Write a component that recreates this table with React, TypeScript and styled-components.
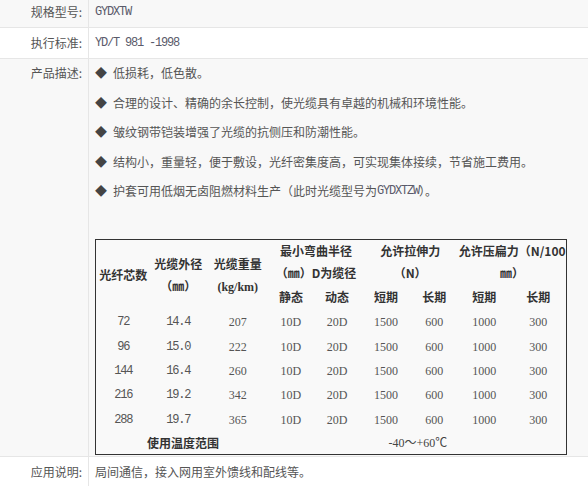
import React from "react";
import styled, { createGlobalStyle } from "styled-components";

const Global = createGlobalStyle`
  html, body { margin: 0; padding: 0; background: #fff; }
  body { font-family: "Noto Sans CJK SC", "Noto Sans", sans-serif; font-size: 12px; color: #555; }
`;

const Page = styled.div`
  width: 588px;
`;

const Row = styled.div<{ $alt?: boolean; $pt: number; $pb: number }>`
  display: grid;
  grid-template-columns: 89px 1fr;
  background: ${(p) => (p.$alt ? "#f8f8f8" : "#ffffff")};
  border-bottom: 1px solid #e6e6e6;
  line-height: 16px;
  & > * {
    padding-top: ${(p) => p.$pt}px;
    padding-bottom: ${(p) => p.$pb}px;
  }
`;

const Label = styled.div`
  box-sizing: border-box;
  text-align: right;
  padding-right: 6px;
  border-right: 1px solid #e6e6e6;
  color: #555;
  white-space: nowrap;
`;

const Value = styled.div`
  padding-left: 6px;
  color: #555;
  min-width: 0;
`;

const Mono = styled.span`
  font-family: "Liberation Mono", "DejaVu Sans Mono", monospace;
  font-size: 12px;
  letter-spacing: -1.2px;
  color: #5a5a6a;
  line-height: 16px;
  vertical-align: top;
`;

const Items = styled.div`
  display: flex;
  flex-direction: column;
  gap: 13.5px;
`;

const Item = styled.div`
  white-space: nowrap;
  height: 16px;
`;

const Bullet = styled.span`
  color: #444;
  margin-right: 6px;
`;

const Spec = styled.table`
  margin-top: 26.5px;
  width: 472px;
  table-layout: fixed;
  border-collapse: collapse;
  border: 1px solid #333;
  background: #f9f9f9;
`;

const Tr = styled.tr<{ $h: number }>`
  height: ${(p) => p.$h}px;
`;

const Th = styled.td`
  padding: 0;
  text-align: center;
  vertical-align: middle;
  font-weight: 700;
  color: #333;
  line-height: 22px;
  white-space: nowrap;
`;

const SerifBold = styled.span`
  font-family: "Liberation Serif", serif;
  font-size: 12px;
`;

const Td = styled.td<{ $mono?: boolean }>`
  padding: 0;
  text-align: center;
  vertical-align: middle;
  color: #555;
  line-height: 16px;
  white-space: nowrap;
  font-family: ${(p) =>
    p.$mono
      ? `"Liberation Mono", "DejaVu Sans Mono", monospace`
      : `"Liberation Serif", "Noto Sans CJK SC", serif`};
  letter-spacing: ${(p) => (p.$mono ? "-1.2px" : "0")};
  font-size: 12px;
`;

const TempCell = styled.td`
  padding: 0;
  text-align: center;
  vertical-align: middle;
  color: #444;
  font-family: "Liberation Serif", "Noto Sans CJK SC", serif;
  font-size: 12px;
`;

const Col = styled.col<{ $w: number }>`
  width: ${(p) => p.$w}px;
`;

const widths = [55, 55, 64, 42, 50, 48, 48, 52, 56];

const rows = [
  ["72", "14.4", "207"],
  ["96", "15.0", "222"],
  ["144", "16.4", "260"],
  ["216", "19.2", "342"],
  ["288", "19.7", "365"],
];

const items: React.ReactNode[] = [
  "低损耗，低色散。",
  "合理的设计、精确的余长控制，使光缆具有卓越的机械和环境性能。",
  "皱纹钢带铠装增强了光缆的抗侧压和防潮性能。",
  "结构小，重量轻，便于敷设，光纤密集度高，可实现集体接续，节省施工费用。",
  <>
    护套可用低烟无卤阻燃材料生产（此时光缆型号为<Mono>GYDXTZW</Mono>）。
  </>,
];

export default function App() {
  return (
    <Page>
      <Global />
      <Row $alt $pt={4} $pb={7}>
        <Label>规格型号:</Label>
        <Value>
          <Mono>GYDXTW</Mono>
        </Value>
      </Row>
      <Row $pt={7} $pb={7}>
        <Label>执行标准:</Label>
        <Value>
          <Mono>YD/T 981 -1998</Mono>
        </Value>
      </Row>
      <Row $alt $pt={6} $pb={1}>
        <Label>产品描述:</Label>
        <Value>
          <Items>
            {items.map((t, i) => (
              <Item key={i}>
                <Bullet>◆</Bullet>
                {t}
              </Item>
            ))}
            <Spec>
              <colgroup>
                {widths.map((w, i) => (
                  <Col key={i} $w={w} />
                ))}
              </colgroup>
              <tbody>
                <Tr $h={44}>
                  <Th rowSpan={2}>光纤芯数</Th>
                  <Th rowSpan={2}>
                    光缆外径
                    <br />（㎜）
                  </Th>
                  <Th rowSpan={2}>
                    光缆重量
                    <br />
                    <SerifBold>(kg/km)</SerifBold>
                  </Th>
                  <Th colSpan={2}>
                    最小弯曲半径
                    <br />
                    （㎜）D为缆径
                  </Th>
                  <Th colSpan={2}>
                    允许拉伸力
                    <br />
                    （N）
                  </Th>
                  <Th colSpan={2}>
                    允许压扁力（N/100
                    <br />
                    ㎜）
                  </Th>
                </Tr>
                <Tr $h={26}>
                  <Th>静态</Th>
                  <Th>动态</Th>
                  <Th>短期</Th>
                  <Th>长期</Th>
                  <Th>短期</Th>
                  <Th>长期</Th>
                </Tr>
                {rows.map((r) => (
                  <Tr $h={24.4} key={r[0]}>
                    <Td $mono>{r[0]}</Td>
                    <Td $mono>{r[1]}</Td>
                    <Td>{r[2]}</Td>
                    <Td>10D</Td>
                    <Td>20D</Td>
                    <Td>1500</Td>
                    <Td>600</Td>
                    <Td>1000</Td>
                    <Td>300</Td>
                  </Tr>
                ))}
                <Tr $h={23}>
                  <Th colSpan={3}>使用温度范围</Th>
                  <TempCell colSpan={6}>-40～+60℃</TempCell>
                </Tr>
              </tbody>
            </Spec>
          </Items>
        </Value>
      </Row>
      <Row $pt={7} $pb={7}>
        <Label>应用说明:</Label>
        <Value>局间通信，接入网用室外馈线和配线等。</Value>
      </Row>
    </Page>
  );
}
